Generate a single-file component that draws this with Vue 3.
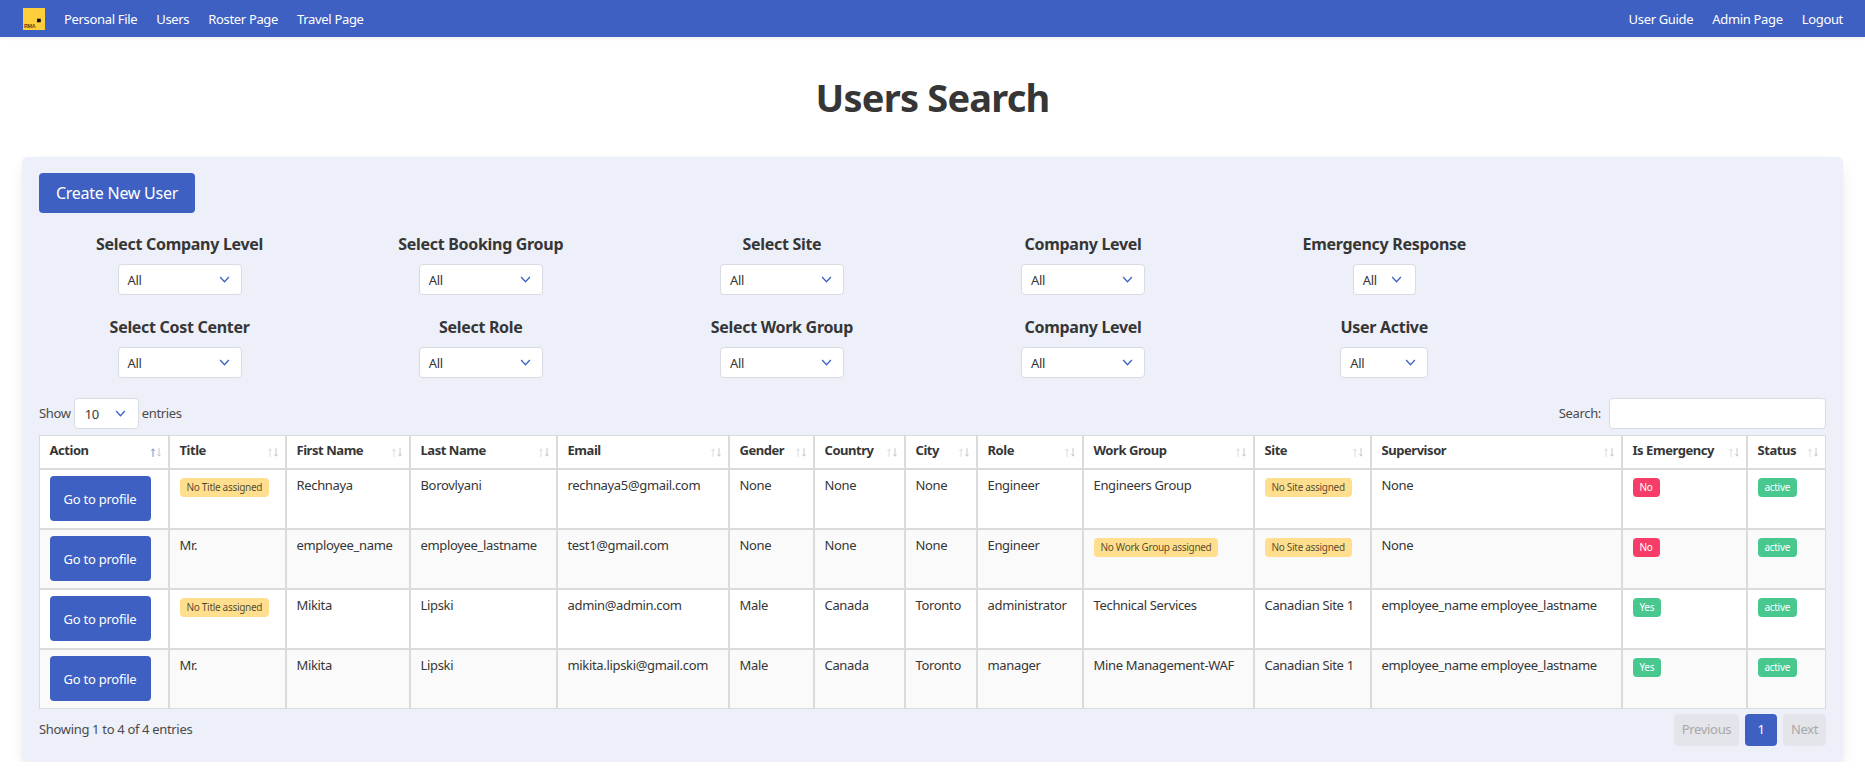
<script setup>
import { ref } from 'vue'

const navLeft = ['Personal File', 'Users', 'Roster Page', 'Travel Page']
const navRight = ['User Guide', 'Admin Page', 'Logout']

const filterRows = ref([
  [
    { label: 'Select Company Level', size: 'wide' },
    { label: 'Select Booking Group', size: 'wide' },
    { label: 'Select Site', size: 'wide' },
    { label: 'Company Level', size: 'wide' },
    { label: 'Emergency Response', size: 'small' },
  ],
  [
    { label: 'Select Cost Center', size: 'wide' },
    { label: 'Select Role', size: 'wide' },
    { label: 'Select Work Group', size: 'wide' },
    { label: 'Company Level', size: 'wide' },
    { label: 'User Active', size: 'mid' },
  ],
])

const columns = [
  { name: 'Action', width: 130 },
  { name: 'Title', width: 117 },
  { name: 'First Name', width: 124 },
  { name: 'Last Name', width: 147 },
  { name: 'Email', width: 172 },
  { name: 'Gender', width: 85 },
  { name: 'Country', width: 91 },
  { name: 'City', width: 72 },
  { name: 'Role', width: 106 },
  { name: 'Work Group', width: 171 },
  { name: 'Site', width: 117 },
  { name: 'Supervisor', width: 251 },
  { name: 'Is Emergency', width: 125 },
  { name: 'Status', width: 77 },
]

const warn = text => ({ text, tag: 'warn' })

const users = ref([
  {
    title: warn('No Title assigned'), first: 'Rechnaya', last: 'Borovlyani', email: 'rechnaya5@gmail.com',
    gender: 'None', country: 'None', city: 'None', role: 'Engineer', group: 'Engineers Group',
    site: warn('No Site assigned'), supervisor: 'None', emergency: false,
  },
  {
    title: 'Mr.', first: 'employee_name', last: 'employee_lastname', email: 'test1@gmail.com',
    gender: 'None', country: 'None', city: 'None', role: 'Engineer', group: warn('No Work Group assigned'),
    site: warn('No Site assigned'), supervisor: 'None', emergency: false,
  },
  {
    title: warn('No Title assigned'), first: 'Mikita', last: 'Lipski', email: 'admin@admin.com',
    gender: 'Male', country: 'Canada', city: 'Toronto', role: 'administrator', group: 'Technical Services',
    site: 'Canadian Site 1', supervisor: 'employee_name employee_lastname', emergency: true,
  },
  {
    title: 'Mr.', first: 'Mikita', last: 'Lipski', email: 'mikita.lipski@gmail.com',
    gender: 'Male', country: 'Canada', city: 'Toronto', role: 'manager', group: 'Mine Management-WAF',
    site: 'Canadian Site 1', supervisor: 'employee_name employee_lastname', emergency: true,
  },
])

const textKeys = ['title', 'first', 'last', 'email', 'gender', 'country', 'city', 'role', 'group', 'site', 'supervisor']
</script>

<template>
  <div class="page">
    <nav class="navbar">
      <div class="nav-side">
        <svg class="logo" viewBox="0 0 22 22" width="22" height="22">
          <rect width="22" height="22" fill="#ffcf3b" />
          <rect x="14" y="10.7" width="3.8" height="3.6" fill="#111" />
          <text x="1" y="20" font-size="5.4" font-weight="700" font-family="Liberation Sans, sans-serif" fill="#5a4a10">RMA</text>
        </svg>
        <a v-for="item in navLeft" :key="item" class="nav-link">{{ item }}</a>
      </div>
      <div class="nav-side">
        <a v-for="item in navRight" :key="item" class="nav-link">{{ item }}</a>
      </div>
    </nav>

    <h1 class="title">Users Search</h1>

    <section class="box">
      <button class="btn create">Create New User</button>

      <div v-for="(row, i) in filterRows" :key="i" class="filters">
        <div v-for="f in row" :key="f.label" class="filter">
          <label>{{ f.label }}</label>
          <div class="select" :class="f.size">
            <span>All</span>
            <svg viewBox="0 0 12 8" width="11" height="7"><path d="M1 1.2 6 6.5 11 1.2" fill="none" stroke="#3e60c2" stroke-width="1.5" /></svg>
          </div>
        </div>
      </div>

      <div class="table-top">
        <div class="show">
          <span class="lift">Show</span>
          <div class="select entries">
            <span>10</span>
            <svg viewBox="0 0 12 8" width="11" height="7"><path d="M1 1.2 6 6.5 11 1.2" fill="none" stroke="#3e60c2" stroke-width="1.5" /></svg>
          </div>
          <span class="lift">entries</span>
        </div>
        <div class="search">
          <span class="lift">Search:</span>
          <input type="text" />
        </div>
      </div>

      <table class="users">
        <colgroup>
          <col v-for="c in columns" :key="c.name" :style="{ width: c.width + 'px' }" />
        </colgroup>
        <thead>
          <tr>
            <th v-for="(c, i) in columns" :key="c.name">
              {{ c.name }}
              <svg class="sort" viewBox="0 0 10 9" width="10" height="9">
                <path d="M2 9V1M0.3 2.7 2 0.8 3.7 2.7" fill="none" :stroke="i === 0 ? '#7f93c4' : '#dcdcdc'" stroke-width="1" />
                <path d="M8 0V8M6.3 6.3 8 8.2 9.7 6.3" fill="none" stroke="#c6c6c6" stroke-width="1" />
              </svg>
            </th>
          </tr>
        </thead>
        <tbody>
          <tr v-for="u in users" :key="u.email">
            <td><button class="btn profile">Go to profile</button></td>
            <td v-for="k in textKeys" :key="k">
              <span v-if="u[k].tag" class="tag warn">{{ u[k].text }}</span>
              <template v-else>{{ u[k] }}</template>
            </td>
            <td><span class="tag" :class="u.emergency ? 'ok' : 'bad'">{{ u.emergency ? 'Yes' : 'No' }}</span></td>
            <td><span class="tag ok">active</span></td>
          </tr>
        </tbody>
      </table>

      <div class="table-bottom">
        <span class="lift">Showing 1 to 4 of 4 entries</span>
        <div class="pager">
          <a class="pg off prev">Previous</a>
          <a class="pg cur">1</a>
          <a class="pg off next">Next</a>
        </div>
      </div>
    </section>
  </div>
</template>

<style>
html, body {
  margin: 0;
  background: #fff;
}
</style>

<style scoped>
.page {
  font-family: "Noto Sans", sans-serif;
  font-size: 13px;
  letter-spacing: -0.33px;
  color: #4a4a4a;
}

.navbar {
  height: 37px;
  background: #3e60c2;
  display: flex;
  justify-content: space-between;
  align-items: center;
  padding: 0 22px 0 23px;
  box-shadow: 0 2px 3px rgba(10, 10, 10, 0.06);
}

.nav-side {
  display: flex;
  align-items: center;
  gap: 19px;
}

.nav-link {
  color: #fff;
  font-size: 13px;
}

.title {
  margin: 40px 0 0;
  text-align: center;
  font-size: 38px;
  line-height: 40px;
  font-weight: 700;
  letter-spacing: -0.8px;
  color: #363636;
  height: 80px;
}

.box {
  margin: 0 22px;
  padding: 16px 17px;
  background: #eef0f9;
  border-radius: 6px;
  box-shadow: 0 8px 16px -2px rgba(10, 10, 10, 0.1), 0 0 2px rgba(10, 10, 10, 0.04);
}

.btn {
  border: none;
  background: #3e60c2;
  color: #fff;
  border-radius: 4px;
  font-family: inherit;
  letter-spacing: -0.25px;
  display: block;
  padding: 0;
}

.create {
  width: 156px;
  height: 40px;
  font-size: 16px;
}

.filters {
  display: grid;
  grid-template-columns: repeat(6, 1fr);
  margin: 0 -10px;
}

.create + .filters {
  margin-top: 19px;
}

.filters + .filters {
  margin-top: 20px;
}

.filter {
  display: flex;
  flex-direction: column;
  align-items: center;
  gap: 8px;
}

.filter label {
  font-size: 16px;
  line-height: 24px;
  font-weight: 700;
  letter-spacing: -0.3px;
  color: #363636;
}

.select {
  height: 31px;
  box-sizing: border-box;
  background: #fff;
  border: 1px solid #d9dbe3;
  border-radius: 4px;
  display: flex;
  align-items: center;
  justify-content: space-between;
  padding: 0 11px 0 9px;
  color: #363636;
  font-size: 13px;
}

.select.wide { width: 124px; }
.select.small { width: 63px; padding-right: 13px; }
.select.mid { width: 88px; }
.select.entries { width: 65px; padding-left: 10px; padding-right: 12px; }

.table-top {
  display: flex;
  justify-content: space-between;
  align-items: center;
  margin-top: 20px;
  height: 31px;
}

.show,
.search {
  display: flex;
  align-items: center;
  gap: 3px;
}

.search {
  gap: 8px;
}

.lift {
  margin-bottom: 2px;
}

.search input {
  width: 217px;
  height: 31px;
  box-sizing: border-box;
  border: 1px solid #d9dbe3;
  border-radius: 4px;
  background: #fff;
}

.users {
  margin-top: 6px;
  width: 100%;
  table-layout: fixed;
  border-collapse: separate;
  border-spacing: 0;
  background: #fff;
  border: 1px solid #dbdbdb;
  color: #363636;
}

.users th,
.users td {
  box-sizing: border-box;
  border-right: 2px solid #dbdbdb;
  border-bottom: 2px solid #dbdbdb;
  text-align: left;
  vertical-align: top;
  padding: 6px 9.5px 7px;
  white-space: nowrap;
  line-height: 19px;
}

.users th:last-child,
.users td:last-child {
  border-right: none;
}

.users tbody tr:last-child td {
  border-bottom: none;
  height: 58px;
}

.users th {
  height: 34px;
  padding-top: 5px;
  padding-bottom: 8px;
  font-weight: 700;
  letter-spacing: -0.45px;
  position: relative;
}

.users tbody tr:nth-child(even) {
  background: #fafafa;
}

.users td {
  height: 60px;
}

.sort {
  position: absolute;
  right: 7px;
  top: 12px;
}

.profile {
  width: 101px;
  height: 45px;
  font-size: 13px;
}

.tag {
  display: inline-block;
  height: 19px;
  line-height: 19px;
  padding: 0 7px;
  border-radius: 4px;
  font-size: 10px;
  letter-spacing: -0.3px;
  margin-top: 2px;
  vertical-align: top;
}

.warn {
  background: #ffdf8e;
  color: rgba(0, 0, 0, 0.7);
}

.ok {
  background: #48c78e;
  color: #fff;
}

.bad {
  background: #f53d68;
  color: #fff;
}

.table-bottom {
  display: flex;
  justify-content: space-between;
  align-items: center;
  margin-top: 5px;
}

.pager {
  display: flex;
  gap: 6px;
}

.pg {
  height: 32px;
  line-height: 30px;
  border-radius: 4px;
  text-align: center;
  width: 32px;
}

.pg.prev { width: 65px; }
.pg.next { width: 43px; }

.pg.off {
  background: #e3e5ea;
  color: #a8a8a8;
}

.pg.cur {
  background: #3e60c2;
  color: #fff;
}
</style>
